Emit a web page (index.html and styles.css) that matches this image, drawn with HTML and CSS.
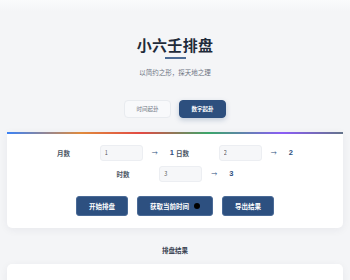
FILE: index.html
```html
<!DOCTYPE html>
<html lang="zh-CN">
<head>
    <meta charset="UTF-8">
    <meta name="viewport" content="width=device-width, initial-scale=1.0">
    <title>小六壬排盘</title>
    <link rel="stylesheet" href="styles.css">
</head>
<body>
    <div class="page">
        <header class="header">
            <h1 class="title">小六壬排盘</h1>
            <div class="title-line"></div>
            <p class="subtitle">以简约之形，探天地之理</p>
        </header>

        <div class="tabs">
            <button class="tab">时间起卦</button>
            <button class="tab active">数字起卦</button>
        </div>

        <div class="card">
            <div class="fields">
                <div class="field">
                    <span class="label">月数</span>
                    <input class="num" type="text" value="1">
                    <span class="arrow">→</span>
                    <span class="result">1</span>
                </div>
                <div class="field">
                    <span class="label">日数</span>
                    <input class="num" type="text" value="2">
                    <span class="arrow">→</span>
                    <span class="result">2</span>
                </div>
                <div class="field">
                    <span class="label">时数</span>
                    <input class="num" type="text" value="3">
                    <span class="arrow">→</span>
                    <span class="result">3</span>
                </div>
            </div>
            <div class="actions">
                <button class="button">开始排盘</button>
                <button class="button">获取当前时间 <span class="dot"></span></button>
                <button class="button">导出结果</button>
            </div>
        </div>

        <h2 class="section-title">排盘结果</h2>
        <div class="card result-card"></div>
    </div>
</body>
</html>
```

FILE: styles.css
```css
body {
    margin: 0;
    background: linear-gradient(to bottom, #fafbfc 0, #f4f5f7 12px);
    font-family: "Noto Sans CJK SC", "Noto Sans", sans-serif;
    color: #333;
}

.page {
    padding: 0 7px;
}

.header {
    text-align: center;
    padding-top: 35px;
}

.title {
    margin: 0;
    font-size: 15px;
    line-height: 20px;
    font-weight: 700;
    color: #1f2b3a;
    letter-spacing: 0.3px;
}

.title-line {
    width: 21px;
    height: 1.5px;
    margin: 2px auto 0;
    background: #4d6b94;
}

.subtitle {
    margin: 8px 0 0;
    font-size: 6.5px;
    line-height: 10px;
    color: #6b7280;
}

.tabs {
    display: flex;
    justify-content: center;
    gap: 8px;
    margin-top: 23px;
}

.tab {
    width: 47px;
    height: 18px;
    padding: 0;
    font-family: inherit;
    font-size: 5.5px;
    color: #6b7280;
    background: #f8f9fb;
    border: 1px solid #e8ebef;
    border-radius: 4px;
}

.tab.active {
    color: #fff;
    font-weight: 700;
    background: #2d4f7e;
    border-color: #2d4f7e;
    box-shadow: 0 2px 5px rgba(45, 79, 126, 0.25);
}

.card {
    margin-top: 14px;
    padding: 13px 0 12px;
    background:
        linear-gradient(to right, #3b82f6 0%, #e08a3c 22%, #e24a44 40%, #3aa66a 60%, #8b5cf6 82%, #64748b 100%) top / 100% 2px no-repeat,
        #fff;
    border-radius: 0 0 5px 5px;
    box-shadow: 0 2px 8px rgba(30, 40, 60, 0.06);
}

.fields {
    display: flex;
    flex-wrap: wrap;
    justify-content: center;
    column-gap: 2px;
    row-gap: 5px;
    width: 240px;
    margin: 0 auto;
}

.field {
    display: flex;
    align-items: center;
    width: 117px;
}

.label {
    width: 43px;
    font-size: 6.5px;
    font-weight: 700;
    color: #4b5563;
}

.num {
    box-sizing: border-box;
    width: 43px;
    height: 16px;
    padding: 0 4px;
    font-family: inherit;
    font-size: 5.5px;
    color: #555;
    background: #f6f7f9;
    border: 1px solid #eceef2;
    border-radius: 3px;
    outline: none;
}

.arrow {
    margin-left: 9px;
    font-size: 6px;
    color: #2d4f7e;
}

.result {
    margin-left: 12px;
    font-family: "Liberation Sans", sans-serif;
    font-size: 7.5px;
    font-weight: 700;
    color: #2d4f7e;
}

.actions {
    display: flex;
    justify-content: center;
    gap: 9px;
    margin-top: 14px;
}

.button {
    display: flex;
    align-items: center;
    justify-content: center;
    gap: 5px;
    height: 20px;
    min-width: 52px;
    padding: 0 12px;
    font-family: inherit;
    font-size: 6.5px;
    font-weight: 700;
    color: #fff;
    background: #2d5080;
    border: 1px solid #4a6a96;
    border-radius: 3px;
}

.dot {
    width: 6px;
    height: 6px;
    border-radius: 50%;
    background: #000;
}

.section-title {
    margin: 17px 0 0;
    text-align: center;
    font-size: 6.5px;
    line-height: 10px;
    font-weight: 700;
    color: #374151;
}

.result-card {
    margin-top: 9px;
    height: 40px;
    border-radius: 5px;
    background: #fff;
}
```
